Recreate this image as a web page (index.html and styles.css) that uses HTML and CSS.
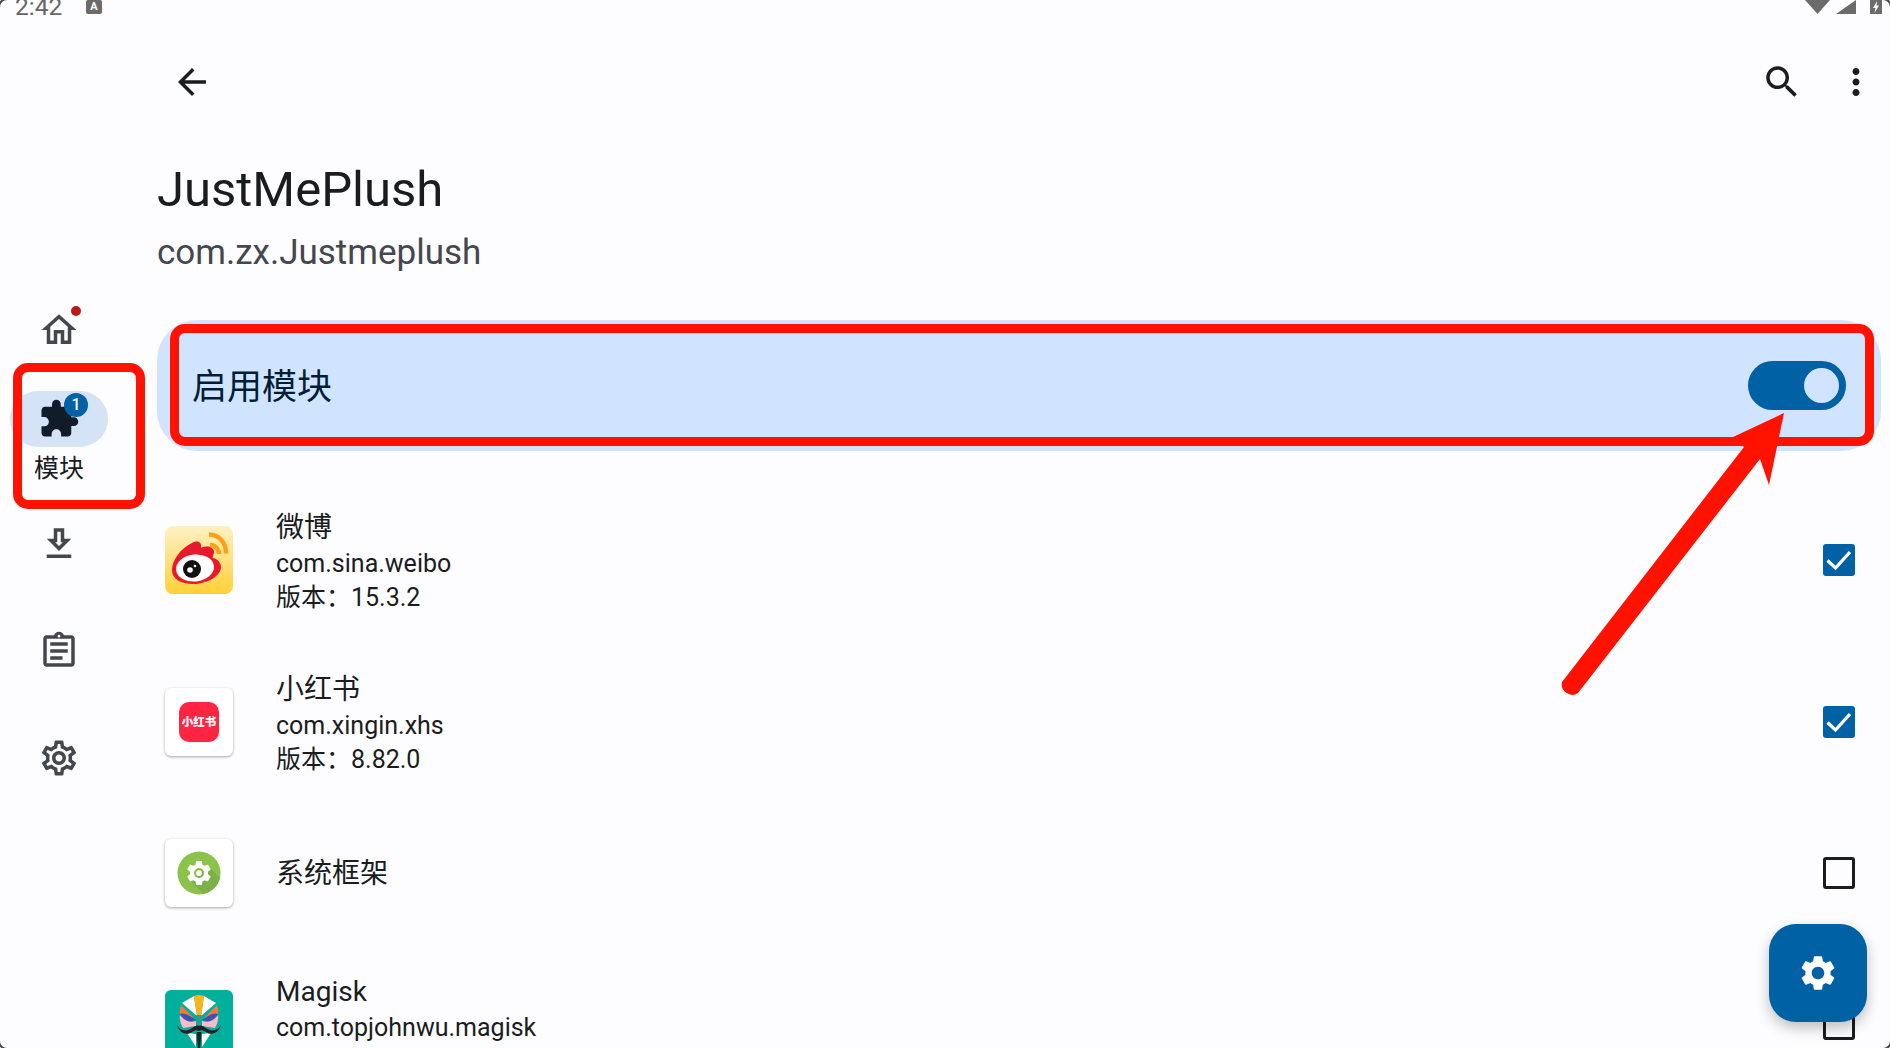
FILE: index.html
```html
<!DOCTYPE html>
<html lang="zh-CN">
  <head>
    <meta charset="utf-8" />
    <meta name="viewport" content="width=device-width, initial-scale=1.0" />
    <title>JustMePlush</title>
    <link rel="stylesheet" href="styles.css">
  </head>
  <body>
    <div class="status">
      <span class="clock">2:42</span>
      <span class="ime">A</span>
      <span class="status_right">
        <svg class="wifi" viewBox="0 0 25 14"><path d="M0 0h25L12.5 14z"/></svg>
        <svg class="signal" viewBox="0 0 20 14"><path d="M20 0v14H0z"/></svg>
        <svg class="battery" viewBox="0 0 12 14"><path d="M0 0h12v14H0z"/><path fill="#fff" d="M7 1L3 8h2.5L4.500 13 9 5.500H6.500z"/></svg>
      </span>
    </div>

    <div class="page">
      <nav class="rail">
        <div class="rail_item">
          <span class="home_icon">
            <svg class="icon" viewBox="0 0 24 24"><path d="M12 5.690l5 4.500V18h-2v-6H9v6H7v-7.810l5-4.500M12 3L2 12h3v8h6v-6h2v6h6v-8h3L12 3z"/></svg>
            <span class="dot"></span>
          </span>
        </div>
        <div class="rail_item active">
          <span class="pill">
            <svg class="icon" viewBox="0 0 24 24"><path d="M20.500 11H19V7c0-1.100-.9-2-2-2h-4V3.500C13 2.120 11.880 1 10.500 1S8 2.120 8 3.500V5H4c-1.100 0-1.990.9-1.990 2v3.800H3.500c1.490 0 2.700 1.210 2.700 2.700s-1.210 2.700-2.700 2.700H2V20c0 1.100.9 2 2 2h3.800v-1.500c0-1.490 1.210-2.700 2.700-2.700 1.490 0 2.700 1.210 2.700 2.700V22H17c1.100 0 2-.9 2-2v-4h1.500c1.380 0 2.500-1.120 2.500-2.500S21.880 11 20.500 11z"/></svg>
            <span class="badge">1</span>
          </span>
          <span class="rail_label">模块</span>
        </div>
        <div class="rail_item">
          <svg class="icon" viewBox="0 0 24 24"><path d="M19 9h-4V3H9v6H5l7 7 7-7zm-8 2V5h2v6h1.170L12 13.170 9.830 11H11zm-6 7h14v2H5v-2z"/></svg>
        </div>
        <div class="rail_item">
          <svg class="icon" viewBox="0 0 24 24"><path d="M7 15h7v2H7zm0-4h10v2H7zm0-4h10v2H7zm12-4h-4.180C14.400 1.840 13.300 1 12 1c-1.300 0-2.400.84-2.820 2H5c-.14 0-.27.01-.4.04-.39.08-.74.28-1.010.55-.18.18-.33.4-.43.64-.1.23-.16.49-.16.77v14c0 .27.06.54.16.78s.25.45.43.64c.27.27.62.47 1.010.55.13.02.26.03.4.03h14c1.100 0 2-.9 2-2V5c0-1.100-.9-2-2-2zm-7-.25c.41 0 .75.34.75.75s-.34.75-.75.75-.75-.34-.75-.75.34-.75.75-.75zM19 19H5V5h14v14z"/></svg>
        </div>
        <div class="rail_item">
          <svg class="icon" viewBox="0 0 24 24"><path d="M19.430 12.980c.04-.32.07-.64.07-.98 0-.34-.03-.66-.07-.98l2.110-1.650c.19-.15.24-.42.12-.64l-2-3.460c-.09-.16-.26-.25-.44-.25-.06 0-.12.01-.17.03l-2.490 1c-.52-.4-1.080-.73-1.690-.98l-.38-2.650C14.460 2.180 14.250 2 14 2h-4c-.25 0-.46.18-.49.42l-.38 2.650c-.61.25-1.170.59-1.690.98l-2.490-1c-.06-.02-.12-.03-.18-.03-.17 0-.34.09-.43.25l-2 3.460c-.13.22-.07.49.12.64l2.110 1.650c-.04.32-.07.65-.07.98 0 .33.03.66.07.98l-2.110 1.650c-.19.15-.24.42-.12.64l2 3.460c.09.16.26.25.44.25.06 0 .12-.01.17-.03l2.490-1c.52.4 1.080.73 1.690.98l.38 2.650c.03.24.24.42.49.42h4c.25 0 .46-.18.49-.42l.38-2.650c.61-.25 1.170-.59 1.690-.98l2.490 1c.06.02.12.03.18.03.17 0 .34-.09.43-.25l2-3.460c.12-.22.07-.49-.12-.64l-2.110-1.650zm-1.980-1.710c.04.31.05.52.05.73 0 .21-.02.43-.05.73l-.14 1.130.89.7 1.080.84-.7 1.210-1.270-.51-1.040-.42-.9.68c-.43.32-.84.56-1.250.73l-1.060.43-.16 1.130-.2 1.350h-1.400l-.19-1.350-.16-1.130-1.060-.43c-.43-.18-.83-.41-1.230-.71l-.91-.7-1.060.43-1.270.51-.7-1.210 1.080-.84.89-.7-.14-1.130c-.03-.31-.05-.54-.05-.74s.02-.43.05-.73l.14-1.130-.89-.7-1.080-.84.7-1.210 1.270.51 1.040.42.9-.68c.43-.32.84-.56 1.250-.73l1.060-.43.16-1.130.2-1.350h1.390l.19 1.350.16 1.130 1.060.43c.43.18.83.41 1.230.71l.91.7 1.060-.43 1.270-.51.7 1.210-1.070.85-.89.7.14 1.130zM12 8c-2.210 0-4 1.790-4 4s1.790 4 4 4 4-1.790 4-4-1.790-4-4-4zm0 6c-1.100 0-2-.9-2-2s.9-2 2-2 2 .9 2 2-.9 2-2 2z"/></svg>
        </div>
      </nav>

      <main class="content">
        <div class="toolbar">
          <svg class="icon dark back" viewBox="0 0 24 24"><path d="M20 11H7.830l5.590-5.590L12 4l-8 8 8 8 1.410-1.410L7.830 13H20v-2z"/></svg>
          <svg class="icon dark" viewBox="0 0 24 24"><path d="M15.500 14h-.79l-.28-.27C15.410 12.590 16 11.110 16 9.500 16 5.910 13.090 3 9.500 3S3 5.910 3 9.500 5.910 16 9.500 16c1.610 0 3.090-.59 4.230-1.570l.27.28v.79l5 4.990L20.490 19l-4.990-5zm-6 0C7.010 14 5 11.990 5 9.500S7.010 5 9.500 5 14 7.010 14 9.500 11.990 14 9.500 14z"/></svg>
          <svg class="icon dark" viewBox="0 0 24 24"><path d="M12 8c1.100 0 2-.9 2-2s-.9-2-2-2-2 .9-2 2 .9 2 2 2zm0 2c-1.100 0-2 .9-2 2s.9 2 2 2 2-.9 2-2-.9-2-2-2zm0 6c-1.100 0-2 .9-2 2s.9 2 2 2 2-.9 2-2-.9-2-2-2z"/></svg>
        </div>

        <h1 class="title">JustMePlush</h1>
        <p class="subtitle">com.zx.Justmeplush</p>

        <div class="enable_card">
          <span class="enable_label">启用模块</span>
          <span class="switch"><span class="thumb"></span></span>
        </div>

        <ul class="app_list">
          <li class="app_row">
            <svg class="app_icon" viewBox="0 0 68 68">
              <defs><linearGradient id="weibo_bg" x1="0" y1="0" x2="0" y2="1"><stop offset="0" stop-color="#fff1c4"/><stop offset="1" stop-color="#ffd036"/></linearGradient></defs>
              <rect width="68" height="68" rx="8" fill="url(#weibo_bg)"/>
              <path fill="#e8192c" d="M7 44C7 34 16 22 27 17c6-3 10-1 9 5 6-3 13-1 13 4 0 3-2 5-1 6 5 1 8 5 8 9 0 9-14 17-28 17C16 58 7 53 7 44z"/>
              <ellipse cx="30" cy="42" rx="19" ry="13.500" fill="#fff" transform="rotate(-6 30 42)"/>
              <circle cx="27" cy="43" r="9" fill="#111"/>
              <circle cx="25" cy="44" r="2.800" fill="#fff"/>
              <circle cx="30" cy="40" r="1.300" fill="#fff"/>
              <path fill="none" stroke="#f9a11b" stroke-width="4.500" d="M44 8.500c10 0 17 8 17 19M45 19c5 0 9 4 9 9"/>
            </svg>
            <div class="app_text">
              <div class="app_name">微博</div>
              <div class="app_line">com.sina.weibo</div>
              <div class="app_line app_version">版本：15.3.2</div>
            </div>
            <span class="check on"><svg viewBox="0 0 32 32"><path d="M4.500 16.500l8 7.500L27 8" fill="none" stroke="#fff" stroke-width="3.300"/></svg></span>
          </li>
          <li class="app_row">
            <span class="app_icon plain"><span class="xhs">小红书</span></span>
            <div class="app_text">
              <div class="app_name">小红书</div>
              <div class="app_line">com.xingin.xhs</div>
              <div class="app_line app_version">版本：8.82.0</div>
            </div>
            <span class="check on"><svg viewBox="0 0 32 32"><path d="M4.500 16.500l8 7.500L27 8" fill="none" stroke="#fff" stroke-width="3.300"/></svg></span>
          </li>
          <li class="app_row">
            <span class="app_icon plain">
              <svg class="framework" viewBox="0 0 44 44">
                <circle cx="22" cy="22" r="21.500" fill="#8bc34a"/>
                <path fill="#7cb048" d="M14 30L30 14l13 13a21.500 21.500 0 0 1-17 16z"/>
                <g transform="translate(7 7) scale(1.250)"><path fill="#fff" fill-rule="evenodd" d="M19.140 12.940c.04-.3.06-.61.06-.94 0-.32-.02-.64-.07-.94l2.030-1.580c.18-.14.23-.41.12-.61l-1.920-3.320c-.12-.22-.37-.29-.59-.22l-2.390.96c-.5-.38-1.030-.7-1.620-.94l-.36-2.540c-.04-.24-.24-.41-.48-.41h-3.840c-.24 0-.43.17-.47.41l-.36 2.540c-.59.24-1.130.57-1.620.94l-2.390-.96c-.22-.08-.47 0-.59.22L2.740 8.870c-.12.21-.08.47.12.61l2.030 1.580c-.05.3-.09.63-.09.94s.02.64.07.94l-2.030 1.580c-.18.14-.23.41-.12.61l1.920 3.320c.12.22.37.29.59.22l2.390-.96c.5.38 1.030.7 1.620.94l.36 2.540c.05.24.24.41.48.41h3.840c.24 0 .44-.17.47-.41l.36-2.540c.59-.24 1.130-.56 1.620-.94l2.390.96c.22.08.47 0 .59-.22l1.920-3.320c.12-.22.07-.47-.12-.61l-2.010-1.580zM12 16a4 4 0 1 1 0-8 4 4 0 0 1 0 8z"/><circle cx="12" cy="12" r="2.300" fill="#fff"/></g>
              </svg>
            </span>
            <div class="app_text">
              <div class="app_name">系统框架</div>
            </div>
            <span class="check"></span>
          </li>
          <li class="app_row">
            <svg class="app_icon" viewBox="0 0 68 68">
              <rect width="68" height="68" rx="6" fill="#00af9c"/>
              <path fill="#fff" d="M17 13L29 6l3 20zM51 13L39 6l-3 20z"/>
              <path fill="#f9b51c" d="M29 6q5-2 10 0l-3.500 24h-3z"/>
              <path fill="#f4793b" d="M16 15q-2 5-1 9l15 5zM52 15q2 5 1 9l-15 5z"/>
              <path fill="#3f51b5" d="M15 24q5-2 16 6-9 3-14 0zM53 24q-5-2-16 6 9 3 14 0z"/>
              <path fill="#f8bbc8" d="M15 25q-1 7 3 13l13-2v-5q-9 3-16-6zM53 25q1 7-3 13l-13-2v-5q9 3 16-6z"/>
              <path fill="#2f9e8f" d="M31 25h6l-3 13z"/>
              <path fill="#fff" d="M22 43l9 1v13zM46 43l-9 1v13z"/>
              <path fill="#222" d="M12 35c3 6 10 7 15 3 3-2 5-3 7-2 2-1 4 0 7 2 5 4 12 3 15-3-2 8-10 11-15 7-3-2-5-2-7-1-2-1-4-1-7 1-5 4-13 1-15-7z"/>
              <path fill="#222" d="M31.500 42h5L35 60h-2z"/>
            </svg>
            <div class="app_text tall">
              <div class="app_name">Magisk</div>
              <div class="app_line">com.topjohnwu.magisk</div>
            </div>
            <span class="check"></span>
          </li>
        </ul>
      </main>
    </div>

    <div class="fab">
      <svg viewBox="0 0 24 24"><path fill="#fff" d="M19.140 12.940c.04-.3.06-.61.06-.94 0-.32-.02-.64-.07-.94l2.030-1.580c.18-.14.23-.41.12-.61l-1.920-3.320c-.12-.22-.37-.29-.59-.22l-2.390.96c-.5-.38-1.030-.7-1.620-.94l-.36-2.540c-.04-.24-.24-.41-.48-.41h-3.840c-.24 0-.43.17-.47.41l-.36 2.540c-.59.24-1.130.57-1.620.94l-2.390-.96c-.22-.08-.47 0-.59.22L2.740 8.870c-.12.21-.08.47.12.61l2.030 1.580c-.05.3-.09.63-.09.94s.02.64.07.94l-2.030 1.580c-.18.14-.23.41-.12.61l1.920 3.320c.12.22.37.29.59.22l2.390-.96c.5.38 1.030.7 1.620.94l.36 2.540c.05.24.24.41.48.41h3.840c.24 0 .44-.17.47-.41l.36-2.540c.59-.24 1.130-.56 1.620-.94l2.390.96c.22.08.47 0 .59-.22l1.920-3.320c.12-.22.07-.47-.12-.61l-2.010-1.580zM12 15.600c-1.980 0-3.600-1.620-3.600-3.600s1.620-3.600 3.600-3.600 3.600 1.620 3.600 3.600-1.620 3.600-3.600 3.600z"/></svg>
    </div>

    <!-- red marks drawn on top of the screenshot -->
    <div class="mark mark_rail"></div>
    <div class="mark mark_card"></div>
    <svg class="mark_arrow" viewBox="0 0 1890 1048">
      <path fill="#ff1200" d="M1784 413L1733 437 1744 447 1562 682a10.500 10.500 0 0 0 16 11L1760 459 1769 485z"/>
    </svg>

    <div class="screen_edge"></div>
  </body>
</html>
```

FILE: styles.css
```css
html, body {
    margin: 0;
    height: 100%;
}

body {
    position: relative;
    width: 1890px;
    height: 1048px;
    overflow: hidden;
    background: #fdfcff;
    color: #1a1c1e;
    font-family: Roboto, "Noto Sans CJK SC", sans-serif;
}

.status {
    display: flex;
    align-items: flex-end;
    height: 16px;
    padding: 0 8px 0 15px;
    color: #666;
    font-size: 24.5px;
    line-height: 16px;
}

.clock {
    width: 71px;
    margin-bottom: 1px;
}

.ime {
    display: flex;
    justify-content: center;
    align-items: center;
    width: 16px;
    height: 14px;
    margin-bottom: 2px;
    border-radius: 2px;
    background: #6b6b6b;
    color: #fff;
    font-size: 11px;
    font-weight: 700;
    line-height: 14px;
}

.status_right {
    display: flex;
    margin-left: auto;
    margin-bottom: 2px;
    fill: #6b6b6b;
}

.wifi {
    width: 25px;
    height: 14px;
}

.signal {
    width: 20px;
    height: 14px;
    margin-left: 6px;
}

.battery {
    width: 12px;
    height: 14px;
    margin-left: 14px;
}

.page {
    display: flex;
}

.rail {
    display: flex;
    flex-direction: column;
    flex: none;
    width: 118px;
    padding-top: 260px;
}

.rail_item {
    display: flex;
    flex-direction: column;
    align-items: center;
    justify-content: center;
    height: 107px;
}

.icon {
    display: block;
    flex: none;
    width: 42px;
    height: 42px;
    fill: #44474e;
}

.icon.dark {
    fill: #1a1c1e;
}

.home_icon {
    position: relative;
}

.dot {
    position: absolute;
    top: -3px;
    right: -1px;
    width: 10px;
    height: 10px;
    border-radius: 50%;
    background: #ba1a1a;
}

.active {
    justify-content: flex-start;
    padding-top: 8px;
    height: 99px;
}

.pill {
    position: relative;
    display: flex;
    justify-content: center;
    align-items: center;
    flex: none;
    width: 98px;
    height: 56px;
    border-radius: 28px;
    background: #d5e3f7;
}

.active .icon {
    fill: #111c2b;
}

.badge {
    position: absolute;
    top: 2px;
    left: 54px;
    width: 24px;
    height: 24px;
    border-radius: 50%;
    background: #0061a4;
    color: #fff;
    font-size: 16px;
    font-weight: 500;
    line-height: 24px;
    text-align: center;
}

.rail_label {
    margin-top: 5px;
    font-size: 25px;
    line-height: 34px;
}

.content {
    flex: 1;
    min-width: 0;
    padding: 0 9px 0 39px;
}

.toolbar {
    display: flex;
    align-items: center;
    gap: 32px;
    height: 132px;
    padding: 0 4px 0 14px;
}

.back {
    margin-right: auto;
}

.title {
    margin: 14px 0 0;
    font-size: 49px;
    font-weight: 400;
    line-height: 56px;
}

.subtitle {
    margin: 11px 0 0;
    color: #44474e;
    font-size: 35px;
    line-height: 48px;
}

.enable_card {
    display: flex;
    align-items: center;
    justify-content: space-between;
    height: 131px;
    margin-top: 43px;
    padding: 0 35px;
    box-sizing: border-box;
    border-radius: 40px;
    background: #d1e4ff;
}

.enable_label {
    margin-bottom: 4px;
    color: #001d36;
    font-size: 35px;
}

.switch {
    display: flex;
    justify-content: flex-end;
    align-items: center;
    width: 98px;
    height: 49px;
    padding-right: 7px;
    box-sizing: border-box;
    border-radius: 25px;
    background: #0061a4;
}

.thumb {
    width: 35px;
    height: 35px;
    border-radius: 50%;
    background: #d1e4ff;
}

.app_list {
    height: 569px;
    margin: 28px 0 0;
    padding: 0;
    overflow: hidden;
    list-style: none;
}

.app_row {
    display: flex;
    align-items: center;
    min-height: 140px;
    padding: 28px 26px 28px 8px;
    box-sizing: border-box;
}

.app_icon {
    display: block;
    flex: none;
    width: 68px;
    height: 68px;
}

.plain {
    display: flex;
    justify-content: center;
    align-items: center;
    border-radius: 6px;
    background: #fff;
    box-shadow: 0 1px 3px rgba(0, 0, 0, 0.35);
}

.xhs {
    width: 40px;
    height: 40px;
    border-radius: 10px;
    background: #ff2442;
    color: #fff;
    font-size: 11.5px;
    font-weight: 900;
    line-height: 41px;
    text-align: center;
    white-space: nowrap;
}

.framework {
    width: 44px;
    height: 44px;
}

.app_text {
    flex: 1;
    margin-left: 43px;
}

.app_text.tall {
    height: 106px;
}

.app_name {
    padding-top: 2px;
    font-size: 28px;
    line-height: 38px;
}

.app_line {
    font-size: 25px;
    line-height: 33px;
}

.app_version {
    padding-top: 2px;
    line-height: 31px;
}

.check {
    flex: none;
    width: 32px;
    height: 32px;
    box-sizing: border-box;
    border: 3.5px solid #1a1c1e;
    border-radius: 3px;
}

.check.on {
    border: 0;
    background: #0061a4;
}

.check svg {
    display: block;
}

.fab {
    position: absolute;
    left: 1769px;
    top: 924px;
    display: flex;
    justify-content: center;
    align-items: center;
    width: 98px;
    height: 98px;
    border-radius: 27px;
    background: #0061a4;
    box-shadow: 0 6px 14px rgba(0, 0, 0, 0.25);
}

.fab svg {
    width: 42px;
    height: 42px;
}

.mark {
    position: absolute;
    box-sizing: border-box;
    border: 9px solid #ff1200;
    border-radius: 15px;
}

.mark_rail {
    left: 13px;
    top: 363px;
    width: 132px;
    height: 146px;
}

.mark_card {
    left: 170px;
    top: 324px;
    width: 1704px;
    height: 122px;
}

.mark_arrow {
    position: absolute;
    left: 0;
    top: 0;
    width: 1890px;
    height: 1048px;
}

/* the photographed device shows a thin dark curve in each corner */
.screen_edge {
    position: absolute;
    left: -2px;
    top: -2px;
    width: 1890px;
    height: 1048px;
    border: 2px solid #444;
    border-radius: 9px;
}
```
